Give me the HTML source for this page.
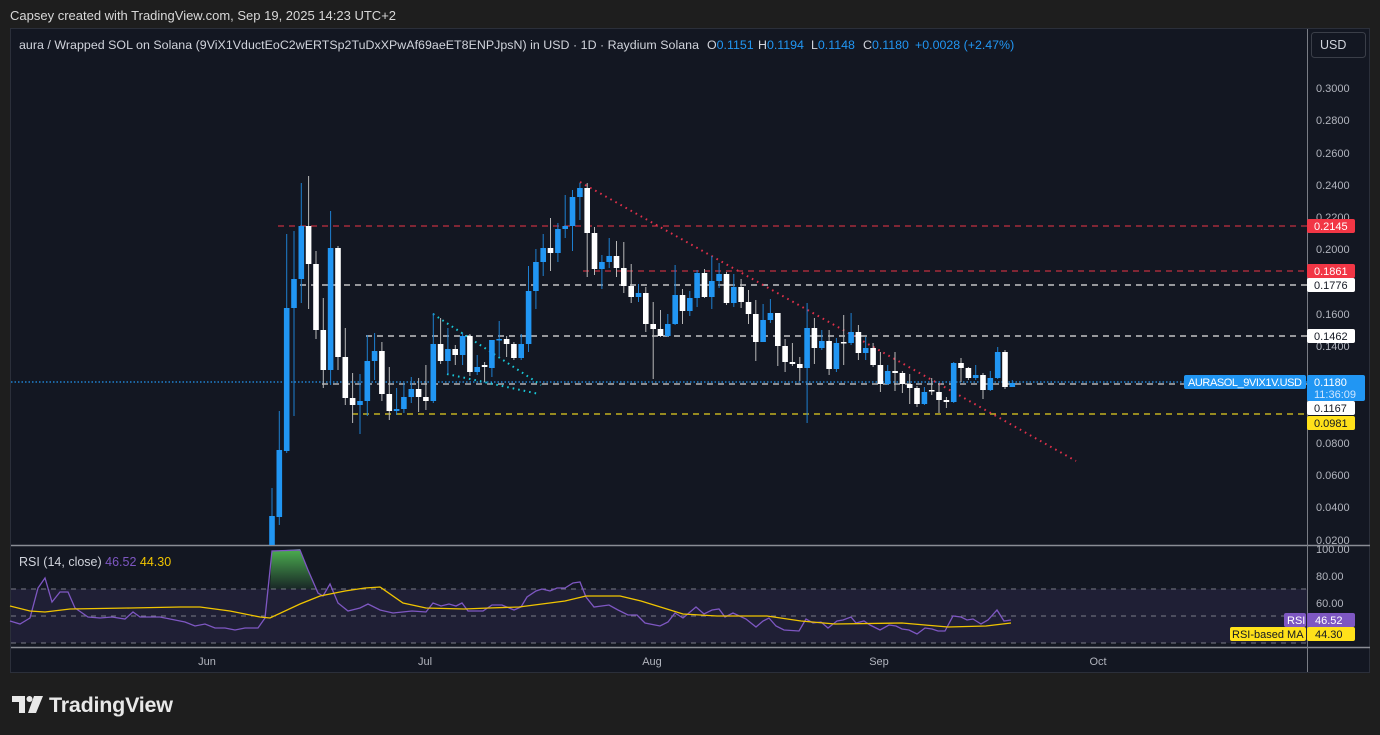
<!DOCTYPE html>
<html><head><meta charset="utf-8"><style>
html,body{margin:0;padding:0;background:#1e1e1e;width:1380px;height:735px;overflow:hidden;font-family:"Liberation Sans",sans-serif}
#top{position:absolute;left:10px;top:8px;color:#d8d8d8;font-size:13px}
svg{position:absolute;left:0;top:0}
</style></head><body>
<div id="top">Capsey created with TradingView.com, Sep 19, 2025 14:23 UTC+2</div>
<svg id="s" width="1380" height="735" xmlns="http://www.w3.org/2000/svg" font-family="Liberation Sans, sans-serif"></svg>
<script>
var s=document.getElementById('s');var h='';
h+='<rect x="10.5" y="28.5" width="1359" height="644" fill="#131722" stroke="#2b2f3a"/>';
h+='<rect x="11" y="589" width="1296" height="54" fill="#7e57c2" fill-opacity="0.12"/>';
[589,616,643].forEach(function(y){h+='<line x1="11" x2="1307" y1="'+y+'" y2="'+y+'" stroke="#787b86" stroke-width="1" stroke-dasharray="5 5"/>';});
h+='<line x1="11" x2="1370" y1="545.5" y2="545.5" stroke="#8a8d95" stroke-width="1.5"/>';
h+='<line x1="11" x2="1370" y1="647.5" y2="647.5" stroke="#8a8d95" stroke-width="1.5"/>';
h+='<line x1="1307.5" x2="1307.5" y1="29" y2="672" stroke="#7a7d85" stroke-width="1"/>';
function dl(y,x1,c,da){h+='<line x1="'+x1+'" x2="1307" y1="'+y+'" y2="'+y+'" stroke="'+c+'" stroke-width="1.3" stroke-dasharray="'+da+'"/>';}
dl(226,278,'#c2303f','6 5');dl(271,583,'#c2303f','6 5');dl(285,300,'#e6e6e6','6 5');dl(336,366,'#e6e6e6','6 5');
dl(384,322,'#d0d0d0','6 5');dl(414,352,'#e5d020','6 5');
h+='<line x1="11" x2="1307" y1="382" y2="382" stroke="#2196f3" stroke-width="1.2" stroke-dasharray="1.5 2"/>';
h+='<line x1="580" y1="182" x2="1076" y2="461" stroke="#e0304a" stroke-width="2" stroke-dasharray="1.6 4.2"/>';
h+='<line x1="433" y1="314" x2="541" y2="385" stroke="#18c8d8" stroke-width="2" stroke-dasharray="1.6 4"/>';
h+='<line x1="447" y1="374" x2="539" y2="394" stroke="#18c8d8" stroke-width="2" stroke-dasharray="1.6 4"/>';
var C=[['b',516,545,488,545],['b',450,517,411,525],['b',308,451,234,453],['b',279,308,231,416],['b',226,279,183,303],['w',226,264,176,309],['w',264,330,251,339],['w',330,370,298,388],['b',248,370,211,385],['w',248,357,246,370],['w',357,398,328,405],['w',398,405,373,423],['b',401,405,374,434],['b',361,401,335,416],['b',351,361,333,380],['w',351,394,342,401],['w',394,411,367,420],['b',409,411,388,415],['b',397,409,383,413],['b',389,397,377,403],['w',389,397,378,412],['w',397,401,365,410],['b',344,401,313,403],['w',344,361,318,364],['b',349,361,328,374],['w',349,355,345,365],['b',336,355,333,365],['w',336,372,334,376],['b',367,372,355,375],['w',365,367,362,382],['b',340,368,340,377],['b',339,340,321,357],['w',339,344,336,357],['w',344,358,342,360],['b',344,358,334,360],['b',291,344,266,352],['b',262,291,249,309],['b',248,262,234,276],['w',248,253,218,271],['b',229,253,223,262],['b',226,229,195,238],['b',197,226,190,251],['b',188,197,183,220],['w',188,233,183,277],['w',233,269,227,275],['b',262,269,255,289],['b',256,262,238,268],['w',256,268,241,277],['w',268,286,242,293],['w',286,297,264,303],['b',293,297,284,302],['w',293,324,287,332],['w',324,329,302,379],['w',329,336,310,337],['b',324,336,314,337],['b',295,324,265,325],['w',295,311,289,324],['b',298,311,291,316],['b',273,298,270,307],['w',273,297,269,298],['b',281,297,256,309],['b',274,281,263,288],['w',274,303,272,305],['b',287,303,274,307],['w',287,302,279,308],['w',302,314,290,324],['w',314,342,300,361],['b',320,342,304,342],['b',313,320,299,323],['w',313,346,313,366],['w',346,362,339,372],['w',362,364,343,366],['w',364,368,357,381],['b',328,368,303,423],['w',328,348,318,364],['b',341,348,330,350],['w',341,369,330,375],['b',343,369,338,372],['w',342,343,315,365],['b',332,343,313,345],['w',332,353,325,360],['b',348,353,337,360],['w',348,365,343,367],['w',365,384,352,392],['b',371,384,365,385],['w',371,373,352,391],['w',373,384,371,393],['w',384,388,374,404],['w',388,404,386,407],['b',392,404,387,405],['w',390,391,378,395],['w',392,400,383,413],['w',400,402,397,408],['b',363,402,362,403],['w',363,368,358,382],['w',368,378,367,380],['b',375,378,365,380],['w',375,390,373,399],['b',378,390,371,391],['b',352,378,347,379],['w',352,387,350,389],['b',383,387,380,387]];
C.forEach(function(c,i){var x=272+i*7.33;var col=c[0]=='b'?'#2196f3':'#ffffff';var wc=c[0]=='b'?'#1e7fd0':'#b8b8b8';
h+='<line x1="'+x.toFixed(1)+'" x2="'+x.toFixed(1)+'" y1="'+c[3]+'" y2="'+c[4]+'" stroke="'+wc+'" stroke-width="1"/>';
var bh=Math.max(1.5,c[2]-c[1]);h+='<rect x="'+(x-2.8).toFixed(1)+'" y="'+c[1]+'" width="5.6" height="'+bh+'" fill="'+col+'"/>';});
h+='<defs><linearGradient id="g" x1="0" y1="0" x2="0" y2="1"><stop offset="0" stop-color="#4caf50"/><stop offset="1" stop-color="#4caf50" stop-opacity="0.1"/></linearGradient></defs>';
h+='<polygon points="270,589 272,551 300,549 309,572 315,589" fill="url(#g)"/>';
var P=[[10,621],[20,624],[30,618],[38,588],[45,578],[52,602],[60,592],[68,592],[75,608],[88,617],[100,618],[112,617],[125,619],[133,612],[140,617],[160,617],[175,620],[185,622],[195,626],[205,624],[215,628],[225,628],[235,630],[245,628],[258,628],[265,618],[272,551],[300,550],[308,570],[318,593],[323,596],[330,584],[338,603],[348,611],[360,608],[368,604],[380,610],[393,613],[412,611],[426,612],[433,603],[441,606],[449,604],[456,606],[462,603],[468,611],[483,611],[492,605],[502,605],[514,610],[521,607],[527,597],[536,591],[542,589],[550,591],[557,588],[565,588],[573,583],[580,582],[586,597],[594,607],[609,605],[618,610],[628,615],[637,615],[645,623],[660,626],[668,622],[675,613],[683,618],[696,607],[704,614],[712,610],[719,609],[725,617],[733,613],[746,619],[756,627],[763,621],[769,618],[776,626],[784,630],[799,631],[806,619],[813,623],[821,622],[828,628],[837,621],[843,620],[851,617],[856,623],[864,621],[870,625],[880,630],[889,625],[896,626],[902,629],[909,630],[917,634],[925,628],[932,629],[938,631],[945,631],[953,616],[961,617],[967,620],[973,619],[981,624],[988,620],[997,610],[1004,621],[1011,620]];
var Y=[[10,606],[30,611],[45,612],[70,609],[130,608],[180,607],[200,607],[230,611],[260,617],[270,618],[300,604],[320,596],[345,591],[365,588],[380,587],[403,603],[426,608],[464,609],[489,608],[519,607],[565,601],[586,596],[620,596],[641,601],[683,614],[717,616],[767,616],[801,621],[835,624],[902,623],[948,627],[986,626],[1011,623]];
function pl(a,c){return '<polyline fill="none" stroke="'+c+'" stroke-width="1.3" points="'+a.map(function(p){return p.join(',')}).join(' ')+'"/>';}
h+=pl(P,'#7e57c2')+pl(Y,'#f0c400');
[[88,'0.3000'],[120,'0.2800'],[153,'0.2600'],[185,'0.2400'],[217,'0.2200'],[249,'0.2000'],[314,'0.1600'],[346,'0.1400'],[443,'0.0800'],[475,'0.0600'],[507,'0.0400'],[540,'0.0200'],[549,'100.00'],[576,'80.00'],[603,'60.00']].forEach(function(a){h+='<text x="1316" y="'+(a[0]+4)+'" font-size="11" fill="#b2b5be">'+a[1]+'</text>';});
function tag(y,t,bg,fg,w){h+='<rect x="1307" y="'+(y-7)+'" width="'+(w||48)+'" height="14" rx="2" fill="'+bg+'"/><text x="1314" y="'+(y+4)+'" font-size="11" fill="'+fg+'">'+t+'</text>';}
tag(226,'0.2145','#f23645','#fff');tag(271,'0.1861','#f23645','#fff');tag(285,'0.1776','#fff','#131722');tag(336,'0.1462','#fff','#131722');
tag(408,'0.1167','#fff','#131722');tag(423,'0.0981','#ffe11a','#131722');
h+='<rect x="1307" y="375" width="58" height="26" rx="2" fill="#2196f3"/><text x="1314" y="386" font-size="11" fill="#fff">0.1180</text><text x="1314" y="398" font-size="11" fill="#cfe6ff">11:36:09</text>';
h+='<rect x="1184" y="375" width="122" height="14" rx="2" fill="#2196f3"/><text x="1188" y="386" font-size="11" fill="#fff" textLength="114">AURASOL_9VIX1V.USD</text>';
h+='<rect x="1284" y="613" width="22" height="14" rx="2" fill="#7e57c2"/><text x="1287" y="624" font-size="11" fill="#fff">RSI</text>';
h+='<rect x="1307" y="613" width="48" height="14" rx="2" fill="#7e57c2"/><text x="1315" y="624" font-size="11" fill="#fff">46.52</text>';
h+='<rect x="1230" y="627" width="76" height="14" rx="2" fill="#ffe11a"/><text x="1232" y="638" font-size="11" fill="#131722">RSI-based MA</text>';
h+='<rect x="1307" y="627" width="48" height="14" rx="2" fill="#ffe11a"/><text x="1315" y="638" font-size="11" fill="#131722">44.30</text>';
h+='<rect x="1311.5" y="32.5" width="54" height="25" rx="3" fill="#131722" stroke="#3a3e48"/><text x="1320" y="49" font-size="12.5" fill="#d1d4dc">USD</text>';
[[207,'Jun'],[425,'Jul'],[652,'Aug'],[879,'Sep'],[1098,'Oct']].forEach(function(a){h+='<text x="'+a[0]+'" y="665" font-size="11" fill="#b2b5be" text-anchor="middle">'+a[1]+'</text>';});
h+='<text x="19" y="49" font-size="12.4" fill="#d1d4dc"><tspan textLength="680">aura / Wrapped SOL on Solana (9ViX1VductEoC2wERTSp2TuDxXPwAf69aeET8ENPJpsN) in USD · 1D · Raydium Solana</tspan><tspan x="707">O</tspan><tspan fill="#2196f3">0.1151</tspan><tspan x="758">H</tspan><tspan fill="#2196f3">0.1194</tspan><tspan x="811">L</tspan><tspan fill="#2196f3">0.1148</tspan><tspan x="863">C</tspan><tspan fill="#2196f3">0.1180</tspan><tspan x="915" fill="#2196f3">+0.0028 (+2.47%)</tspan></text>';
h+='<text x="19" y="566" font-size="12.5" fill="#d1d4dc">RSI (14, close) <tspan fill="#7e57c2">46.52</tspan> <tspan fill="#f0c400">44.30</tspan></text>';
h+='<g fill="#e8e8e8"><rect x="12" y="696" width="13" height="6"/><rect x="19" y="696" width="6" height="17"/><circle cx="29.5" cy="699" r="3"/><polygon points="34,696 43,696 36,713 28,713"/></g>';
h+='<text x="49" y="712" font-size="21.5" font-weight="bold" fill="#e8e8e8" textLength="124">TradingView</text>';
s.innerHTML=h;
</script>
</body></html>
